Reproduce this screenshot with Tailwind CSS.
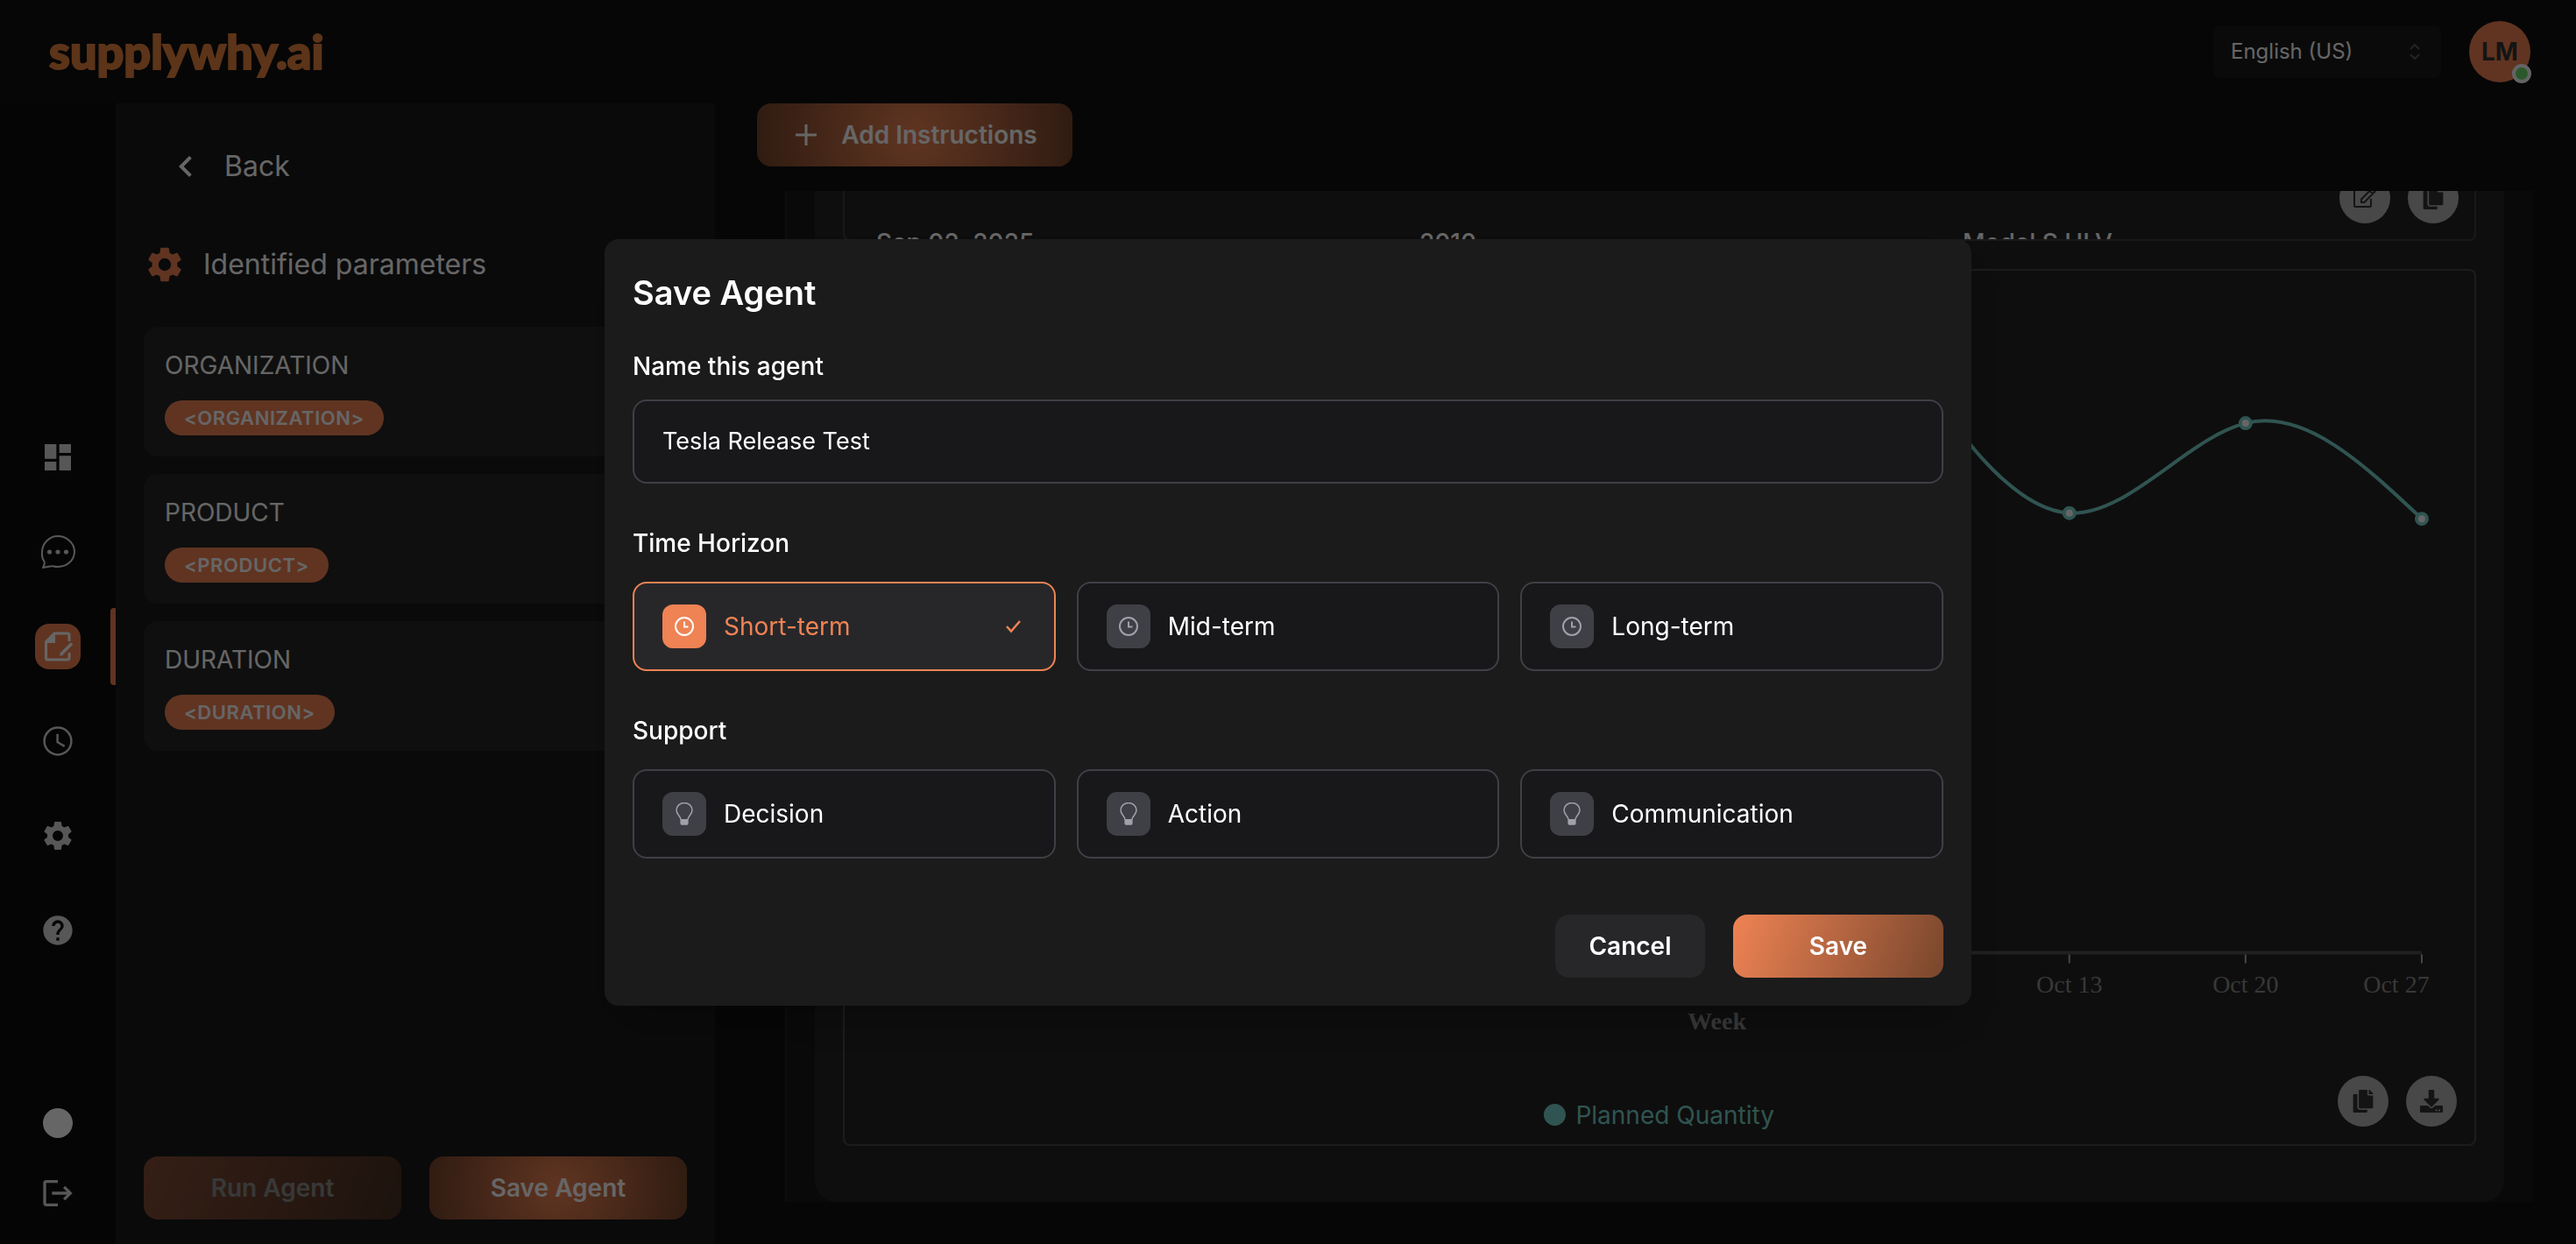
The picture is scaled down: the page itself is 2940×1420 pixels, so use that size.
<!DOCTYPE html>
<html lang="en">
<head>
<meta charset="utf-8">
<meta name="viewport" content="width=device-width, initial-scale=1">
<title>supplywhy.ai – Save Agent</title>
<script src="https://cdn.jsdelivr.net/npm/@tailwindcss/browser@4"></script>
</head>
<body class="bg-[#101010] font-[Inter,sans-serif] text-[28px] leading-10 text-white">

<svg class="hidden" aria-hidden="true">
  <symbol id="gear" viewBox="0 0 24 24"><path fill="currentColor" d="M19.14 12.94c.04-.3.06-.61.06-.94 0-.32-.02-.64-.07-.94l2.03-1.58a.49.49 0 0 0 .12-.61l-1.92-3.32a.49.49 0 0 0-.59-.22l-2.39.96c-.5-.38-1.03-.7-1.62-.94l-.36-2.54a.48.48 0 0 0-.48-.41h-3.84a.48.48 0 0 0-.47.41l-.36 2.54c-.59.24-1.13.57-1.62.94l-2.39-.96a.48.48 0 0 0-.59.22L2.74 8.87c-.12.21-.08.47.12.61l2.03 1.58c-.05.3-.09.63-.09.94s.02.64.07.94l-2.03 1.58a.49.49 0 0 0-.12.61l1.92 3.32c.12.22.37.29.59.22l2.39-.96c.5.38 1.03.7 1.62.94l.36 2.54c.05.24.24.41.48.41h3.84c.24 0 .44-.17.47-.41l.36-2.54c.59-.24 1.13-.56 1.62-.94l2.39.96c.22.08.47 0 .59-.22l1.92-3.32a.48.48 0 0 0-.12-.61zM12 15.6A3.6 3.6 0 1 1 12 8.400a3.6 3.6 0 0 1 0 7.200z"/></symbol>
  <symbol id="copy" viewBox="0 0 448 512"><path fill="currentColor" d="M320 448v40c0 13.255-10.745 24-24 24H24c-13.255 0-24-10.745-24-24V120c0-13.255 10.745-24 24-24h72v296c0 30.879 25.121 56 56 56h168zm0-344V0H152c-13.255 0-24 10.745-24 24v368c0 13.255 10.745 24 24 24h272c13.255 0 24-10.745 24-24V128H344c-13.200 0-24-10.800-24-24zm120.971-31.029L375.029 7.029A24 24 0 0 0 358.059 0H352v96h96v-6.059a24 24 0 0 0-7.029-16.970z"/></symbol>
  <symbol id="clock" viewBox="0 0 24 24"><g fill="none" stroke="currentColor" stroke-width="2"><circle cx="12" cy="12" r="10"/><path d="M12 6.500V12.500H16.500"/></g></symbol>
  <symbol id="bulb" viewBox="0 0 20 26"><path fill="none" stroke="currentColor" stroke-width="1.500" d="M6 19.500C5.600 15.500 1 13.600 1 8.800a9 8.400 0 0 1 18 0C19 13.600 14.400 15.500 14 19.500"/><path fill="currentColor" d="M5.400 19h9.200v4.200a2.600 2.600 0 0 1-2.600 2.600H8a2.600 2.600 0 0 1-2.600-2.600z"/></symbol>
</svg>

<div class="flex h-screen flex-col overflow-hidden">
  <header class="flex h-[118px] shrink-0 items-center justify-between pl-14 pr-[52px]">
    <a href="#" class="font-[Lato,sans-serif] text-[54px] font-black leading-[60px] text-[#e6823f] [-webkit-text-stroke:2px_currentColor]">supplywhy.ai</a>
    <div class="flex items-center gap-8">
      <div class="relative">
        <select aria-label="Language" class="h-[60px] w-[260px] appearance-none rounded-lg bg-[#1a1a1a] px-5 text-2xl">
          <option>English (US)</option>
        </select>
        <svg class="pointer-events-none absolute right-6 top-[21px] h-[18px] w-3 text-[#5a5a5a]" viewBox="0 0 12 18" fill="none" stroke="currentColor" stroke-width="2"><path d="M1 6l5-5 5 5M1 12l5 5 5-5"/></svg>
      </div>
      <button class="relative flex size-[70px] items-center justify-center rounded-full bg-[#ef8354] font-bold text-[#333]">LM
        <span class="absolute -bottom-px -right-px size-[22px] rounded-full border-4 border-[#fafafa] bg-[#6cdc6c]"></span>
      </button>
    </div>
  </header>

  <div class="flex min-h-0 flex-1">
    <nav class="flex w-[132px] shrink-0 flex-col items-center bg-[#0e0e0e] pb-[38px] pt-[360px] text-[#d9d9d9]">
      <div class="flex w-full flex-col gap-5">
        <a href="#" aria-label="Dashboard" class="flex h-[88px] items-center justify-center"><svg class="size-10" viewBox="0 0 24 24" fill="currentColor"><path d="M3 13h8V3H3v10zm0 8h8v-6H3v6zm10 0h8V11h-8v10zm0-18v6h8V3h-8z"/></svg></a>
        <a href="#" aria-label="Chat" class="flex h-[88px] items-center justify-center"><svg class="size-11" viewBox="0 0 44 44" fill="none" stroke="currentColor" stroke-width="2"><path d="M5 40c1.500-2.500 2-4.500 1.800-6.500A18 17 0 0 1 4 22.500C4 12.500 12 4 22 4s19 8 19 17.500S33 39 22 39c-2 0-3.500-.2-5.500-.8C12.500 38 9.500 39.500 5 40z" stroke-linejoin="round"/><g fill="currentColor" stroke="none"><circle cx="12.500" cy="22" r="2.600"/><circle cx="22" cy="22" r="2.600"/><circle cx="31.500" cy="22" r="2.600"/></g></svg></a>
        <a href="#" aria-label="Agents" class="relative flex h-[88px] items-center justify-center"><span class="flex size-[52px] items-center justify-center rounded-2xl bg-[#ef8354] text-white"><svg class="size-9" viewBox="0 0 36 36" fill="none" stroke="currentColor" stroke-width="3"><path d="M31 12V4.500a1.500 1.500 0 0 0-1.500-1.500H14L4.500 12.500V31.500A1.500 1.500 0 0 0 6 33H29.500a1.500 1.500 0 0 0 1.500-1.500V25"/><path fill="currentColor" stroke="none" d="M15 3v11H4z"/><path stroke-width="3.500" d="M34 14.500L22 26.500"/><path fill="currentColor" stroke="none" d="M21 24l3.500 3.500L20 29z"/></svg></span><span class="absolute inset-y-0 right-0 w-1.5 rounded-l bg-[#ef8354]"></span></a>
        <a href="#" aria-label="History" class="flex h-[88px] items-center justify-center"><svg class="size-10" viewBox="0 0 24 24" fill="currentColor"><path d="M11.990 2C6.470 2 2 6.480 2 12s4.470 10 9.990 10C17.520 22 22 17.520 22 12S17.520 2 11.990 2zM12 20.500a8.500 8.500 0 1 1 0-17 8.500 8.500 0 0 1 0 17zm.5-13.500H11v6l5.250 3.150.75-1.230-4.500-2.670z"/></svg></a>
        <a href="#" aria-label="Settings" class="flex h-[88px] items-center justify-center"><svg class="size-10"><use href="#gear"/></svg></a>
        <a href="#" aria-label="Help" class="flex h-[88px] items-center justify-center"><svg class="size-10" viewBox="0 0 24 24" fill="currentColor"><path d="M12 2C6.480 2 2 6.480 2 12s4.480 10 10 10 10-4.480 10-10S17.520 2 12 2zm1 17h-2v-2h2v2zm2.070-7.750l-.9.920C13.450 12.900 13 13.500 13 15h-2v-.5c0-1.100.45-2.100 1.170-2.830l1.240-1.260c.37-.36.59-.86.59-1.410 0-1.100-.9-2-2-2s-2 .9-2 2H8c0-2.210 1.790-4 4-4s4 1.790 4 4c0 .88-.36 1.680-.93 2.250z"/></svg></a>
      </div>
      <div class="mt-auto flex flex-col items-center gap-[43px]">
        <button aria-label="Theme" class="size-[34px] rounded-full bg-white"></button>
        <button aria-label="Log out" class="size-10"><svg class="size-10" viewBox="0 0 24 24" fill="currentColor"><path d="M17 7l-1.410 1.410L18.170 11H8v2h10.170l-2.580 2.580L17 17l5-5zM4 5h8V3H4c-1.100 0-2 .9-2 2v14c0 1.100.9 2 2 2h8v-2H4V5z"/></svg></button>
      </div>
    </nav>

    <aside class="flex w-[684px] shrink-0 flex-col bg-[#1a1a1a] px-8 pb-7 pt-12">
      <a href="#" class="flex items-center gap-5 pl-6 text-[32px]"><svg class="size-12" viewBox="0 0 24 24" fill="currentColor"><path d="M15.410 7.410L14 6l-6 6 6 6 1.410-1.410L10.830 12z"/></svg>Back</a>
      <h2 class="mt-16 flex items-center gap-5 text-[32px]"><svg class="size-12 text-[#ef8354]"><use href="#gear"/></svg>Identified parameters</h2>
      <div class="mt-[47px] flex flex-col gap-5">
        <section class="flex flex-col items-start gap-5 rounded-2xl bg-[#272727] p-6">
          <h3>ORGANIZATION</h3>
          <span class="rounded-full bg-[#ef8354] px-[22px] text-[22px] font-semibold tracking-wide">&lt;ORGANIZATION&gt;</span>
        </section>
        <section class="flex flex-col items-start gap-5 rounded-2xl bg-[#272727] p-6">
          <h3>PRODUCT</h3>
          <span class="rounded-full bg-[#ef8354] px-[22px] text-[22px] font-semibold tracking-wide">&lt;PRODUCT&gt;</span>
        </section>
        <section class="flex flex-col items-start gap-5 rounded-2xl bg-[#272727] p-6">
          <h3>DURATION</h3>
          <span class="rounded-full bg-[#ef8354] px-[22px] text-[22px] font-semibold tracking-wide">&lt;DURATION&gt;</span>
        </section>
      </div>
      <div class="mt-auto grid grid-cols-2 gap-8">
        <button disabled class="h-[72px] rounded-2xl bg-[linear-gradient(110deg,#ef8354,#78462c)] font-semibold opacity-50">Run Agent</button>
        <button class="h-[72px] rounded-2xl bg-[radial-gradient(circle,#ef8354,#78462c)] font-semibold">Save Agent</button>
      </div>
    </aside>

    <main class="flex min-w-0 flex-1 flex-col pb-12 pl-12 pr-12">
      <button class="flex h-[72px] w-[360px] items-center justify-center gap-6 rounded-2xl bg-[radial-gradient(circle,#ef8354,#78462c)] font-semibold"><svg class="size-8" viewBox="0 0 32 32" stroke="currentColor" stroke-width="3"><path d="M16 4v24M4 16h24"/></svg>Add Instructions</button>
      <div class="ml-8 mt-7 flex min-h-0 flex-1 flex-col justify-end overflow-hidden border-l-2 border-[#222] bg-[#171717] pl-8 pr-[34px]">
        <div class="flex shrink-0 flex-col gap-8 rounded-3xl bg-[#232323] px-8 pb-16">
          <div class="relative h-[140px] overflow-hidden rounded-lg border-2 border-[#3f3f46]">
            <table class="mt-[120px] w-full table-fixed font-medium">
              <tbody><tr><td class="pl-9">Sep 02, 2025</td><td class="pl-9">2010</td><td class="pl-9">Model S HLV</td></tr></tbody>
            </table>
            <div class="absolute bottom-[18px] right-[18px] flex gap-5 text-[#333]">
              <button aria-label="Edit" class="flex size-[58px] items-center justify-center rounded-full bg-[#b5b5b5]"><svg class="size-7" viewBox="0 0 28 28" fill="none" stroke="currentColor" stroke-width="2" stroke-linejoin="round"><path d="M15 5H3a1 1 0 0 0-1 1v17a1 1 0 0 0 1 1h17a1 1 0 0 0 1-1V15"/><path d="M10 15.500L22 3.200l3.500 3.500L13.300 19H10zM19.500 5.700l3.500 3.500"/></svg></button>
              <button aria-label="Copy table" class="flex size-[58px] items-center justify-center rounded-full bg-[#b5b5b5]"><svg class="size-[26px]"><use href="#copy"/></svg></button>
            </div>
          </div>
          <div class="relative rounded-lg border-2 border-[#474747]">
            <svg class="block w-full" viewBox="0 0 1859 996" role="img" aria-label="Planned quantity per week">
              <path d="M124 778H1799" stroke="#505050" stroke-width="4"/>
              <path d="M1196 780v10M1397 780v10M1598 780v10M1799 780v10" stroke="#b0b0b0" stroke-width="2"/>
              <g class="font-[Liberation_Serif,serif] text-[28px]" fill="#8c8c8c" text-anchor="middle">
                <text x="1397" y="824">Oct 13</text>
                <text x="1598" y="824">Oct 20</text>
                <text x="1770" y="824">Oct 27</text>
                <text x="995" y="866" class="font-bold">Week</text>
              </g>
              <path d="M1196 74C1263 178 1330 273 1397 276.500C1464 280 1531 191 1598 174C1665 157 1732 220 1799 283" fill="none" stroke="#79d3ca" stroke-width="4"/>
              <g fill="#fff" stroke="#79d3ca" stroke-width="4"><circle cx="1397" cy="276.500" r="6"/><circle cx="1598" cy="174" r="6"/><circle cx="1799" cy="283" r="6"/></g>
              <circle cx="810" cy="963" r="12.500" fill="#79d3ca"/>
              <text x="834" y="973" class="text-[28px]" fill="#79d3ca">Planned Quantity</text>
            </svg>
            <div class="absolute bottom-5 right-5 flex gap-5 text-[#333]">
              <button aria-label="Copy chart" class="flex size-[58px] items-center justify-center rounded-full bg-[#b5b5b5]"><svg class="size-[26px]"><use href="#copy"/></svg></button>
              <button aria-label="Download chart" class="flex size-[58px] items-center justify-center rounded-full bg-[#b5b5b5]"><svg class="size-[26px]" viewBox="0 0 512 512" fill="currentColor"><path d="M216 0h80c13.300 0 24 10.700 24 24v168h87.700c17.800 0 26.700 21.500 14.100 34.100L269.700 378.300c-7.500 7.500-19.800 7.500-27.300 0L90.100 226.100c-12.600-12.600-3.700-34.100 14.100-34.100H192V24c0-13.300 10.700-24 24-24zm296 376v112c0 13.300-10.700 24-24 24H24c-13.300 0-24-10.700-24-24V376c0-13.300 10.700-24 24-24h146.700l49 49c20.100 20.100 52.500 20.100 72.600 0l49-49H488c13.300 0 24 10.700 24 24zm-124 88c0-11-9-20-20-20s-20 9-20 20 9 20 20 20 20-9 20-20zm64 0c0-11-9-20-20-20s-20 9-20 20 9 20 20 20 20-9 20-20z"/></svg></button>
            </div>
          </div>
        </div>
      </div>
    </main>
  </div>
</div>

<div class="fixed inset-0 flex items-center justify-center bg-black/60">
  <form role="dialog" aria-labelledby="dialog-title" class="w-[1560px] max-w-full rounded-2xl bg-[#1b1b1b] p-8 shadow-2xl">
    <h1 id="dialog-title" class="mb-8 text-[38px] font-semibold leading-[59px]">Save Agent</h1>
    <label for="agent-name" class="mb-4 block font-medium leading-[44px]">Name this agent</label>
    <input id="agent-name" type="text" value="Tesla Release Test" class="block h-24 w-full rounded-2xl border-2 border-[#3f3f46] bg-[#18181b] px-8 text-[27px]">

    <fieldset class="mt-[46px]">
      <legend class="mb-[22px] font-medium leading-[44px]">Time Horizon</legend>
      <div class="grid grid-cols-3 gap-6">
        <label class="flex h-[102px] items-center gap-5 rounded-2xl border-2 border-[#ef8354] bg-[#27272a] px-8 text-[#ef8354]">
          <input type="radio" name="horizon" checked class="sr-only">
          <span class="flex size-[50px] items-center justify-center rounded-xl bg-[#ef8354] text-white"><svg class="size-6"><use href="#clock"/></svg></span>Short-term
          <svg class="ml-auto size-7" viewBox="0 0 28 28" fill="none" stroke="currentColor" stroke-width="2.500"><path d="M6 14l5 5.500L21 8"/></svg>
        </label>
        <label class="flex h-[102px] items-center gap-5 rounded-2xl border-2 border-[#3f3f46] bg-[#18181b] px-8">
          <input type="radio" name="horizon" class="sr-only">
          <span class="flex size-[50px] items-center justify-center rounded-xl bg-[#3f3f46] text-[#a1a1aa]"><svg class="size-6"><use href="#clock"/></svg></span>Mid-term
        </label>
        <label class="flex h-[102px] items-center gap-5 rounded-2xl border-2 border-[#3f3f46] bg-[#18181b] px-8">
          <input type="radio" name="horizon" class="sr-only">
          <span class="flex size-[50px] items-center justify-center rounded-xl bg-[#3f3f46] text-[#a1a1aa]"><svg class="size-6"><use href="#clock"/></svg></span>Long-term
        </label>
      </div>
    </fieldset>

    <fieldset class="mt-[46px]">
      <legend class="mb-[22px] font-medium leading-[44px]">Support</legend>
      <div class="grid grid-cols-3 gap-6">
        <label class="flex h-[102px] items-center gap-5 rounded-2xl border-2 border-[#3f3f46] bg-[#18181b] px-8">
          <input type="radio" name="support" class="sr-only">
          <span class="flex size-[50px] items-center justify-center rounded-xl bg-[#3f3f46] text-[#a1a1aa]"><svg class="h-[26px] w-5"><use href="#bulb"/></svg></span>Decision
        </label>
        <label class="flex h-[102px] items-center gap-5 rounded-2xl border-2 border-[#3f3f46] bg-[#18181b] px-8">
          <input type="radio" name="support" class="sr-only">
          <span class="flex size-[50px] items-center justify-center rounded-xl bg-[#3f3f46] text-[#a1a1aa]"><svg class="h-[26px] w-5"><use href="#bulb"/></svg></span>Action
        </label>
        <label class="flex h-[102px] items-center gap-5 rounded-2xl border-2 border-[#3f3f46] bg-[#18181b] px-8">
          <input type="radio" name="support" class="sr-only">
          <span class="flex size-[50px] items-center justify-center rounded-xl bg-[#3f3f46] text-[#a1a1aa]"><svg class="h-[26px] w-5"><use href="#bulb"/></svg></span>Communication
        </label>
      </div>
    </fieldset>

    <div class="mt-16 flex justify-end gap-8">
      <button type="button" class="h-[72px] w-[171px] rounded-2xl bg-[#27272a] font-semibold">Cancel</button>
      <button type="submit" class="h-[72px] w-60 rounded-2xl bg-[linear-gradient(110deg,#ef8354,#78462c)] font-semibold">Save</button>
    </div>
  </form>
</div>
</body>
</html>
